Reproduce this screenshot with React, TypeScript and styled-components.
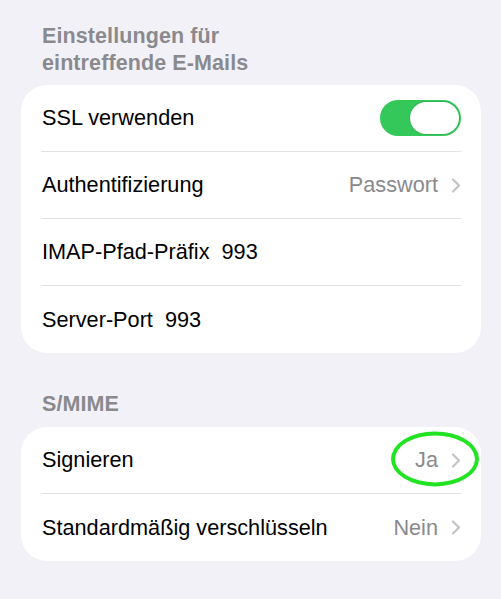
import React, {useState} from 'react';
import styled, {createGlobalStyle} from "styled-components";

const GlobalStyle = createGlobalStyle`
  html, body {
    margin: 0;
    padding: 0;
    background: #f2f1f7;
  }
  body {
    font-family: "Liberation Sans", Arial, sans-serif;
    -webkit-font-smoothing: antialiased;
  }
`

const Chevron = () => (
    <svg width="10" height="15" viewBox="0 0 10 15" fill="none">
        <path d="M2 1.5 L8 7.5 L2 13.5" stroke="#c4c4c8" strokeWidth="2.2"
              strokeLinecap="round" strokeLinejoin="round"/>
    </svg>
)

export default function App() {
    const [ssl, setSsl] = useState(true)

    return (
        <Page>
            <GlobalStyle/>
            <SectionTitle>
                Einstellungen für<br/>eintreffende E-Mails
            </SectionTitle>
            <Card>
                <Row>
                    <Label>SSL verwenden</Label>
                    <Toggle $on={ssl} onClick={() => setSsl(!ssl)}>
                        <Knob/>
                    </Toggle>
                </Row>
                <Row>
                    <Label>Authentifizierung</Label>
                    <Trailing>
                        <Value>Passwort</Value>
                        <Chevron/>
                    </Trailing>
                </Row>
                <Row>
                    <Label>IMAP-Pfad-Präfix<Inline>993</Inline></Label>
                </Row>
                <Row>
                    <Label>Server-Port<Inline>993</Inline></Label>
                </Row>
            </Card>

            <SectionTitle $spaced>S/MIME</SectionTitle>
            <Card>
                <Row>
                    <Label>Signieren</Label>
                    <Trailing>
                        <Value>Ja</Value>
                        <Chevron/>
                        <Highlight/>
                    </Trailing>
                </Row>
                <Row>
                    <Label>Standardmäßig verschlüsseln</Label>
                    <Trailing>
                        <Value>Nein</Value>
                        <Chevron/>
                    </Trailing>
                </Row>
            </Card>
        </Page>
    );
}

const Page = styled.div`
  width: 501px;
  height: 599px;
  box-sizing: border-box;
  padding: 23px 20px 0 21px;
  overflow: hidden;
`

const SectionTitle = styled.div<{ $spaced?: boolean }>`
  margin: ${p => p.$spaced ? '38px' : '0'} 0 ${p => p.$spaced ? '9px' : '8px'};
  padding-left: 21px;
  font-size: 21.5px;
  line-height: 27px;
  font-weight: 600;
  letter-spacing: 0.1px;
  color: #8a8a8e;
`

const Card = styled.div`
  background: #fff;
  border-radius: 26px;
`

const Row = styled.div`
  height: 67px;
  margin: 0 20px;
  display: flex;
  align-items: center;
  justify-content: space-between;
  border-bottom: 1px solid #e2e2e5;
  box-sizing: border-box;

  &:last-child {
    border-bottom: none;
  }
`

const Label = styled.div`
  font-size: 21.7px;
  color: #000;
  display: flex;
  align-items: center;
  margin-left: 1px;
`

const Inline = styled.span`
  margin-left: 12px;
`

const Trailing = styled.div`
  position: relative;
  display: flex;
  align-items: center;
  gap: 13px;
`

const Value = styled.span`
  font-size: 21.7px;
  color: #8a8a8e;
`

const Toggle = styled.div<{ $on: boolean }>`
  width: 81px;
  height: 36px;
  border-radius: 18px;
  background: ${p => p.$on ? '#34c759' : '#e9e9eb'};
  display: flex;
  align-items: center;
  justify-content: ${p => p.$on ? 'flex-end' : 'flex-start'};
  padding: 0 2px;
  box-sizing: border-box;
  cursor: pointer;
`

const Knob = styled.div`
  width: 49px;
  height: 32px;
  border-radius: 16px;
  background: #fff;
  box-shadow: 0 0 0 1px rgba(40, 160, 70, 0.35);
`

const Highlight = styled.div`
  position: absolute;
  left: 50%;
  top: 50%;
  width: 88px;
  height: 55px;
  transform: translate(calc(-50% - 3px), -52%);
  border: 4px solid #22e322;
  border-radius: 50%;
  box-sizing: border-box;
  pointer-events: none;
`
